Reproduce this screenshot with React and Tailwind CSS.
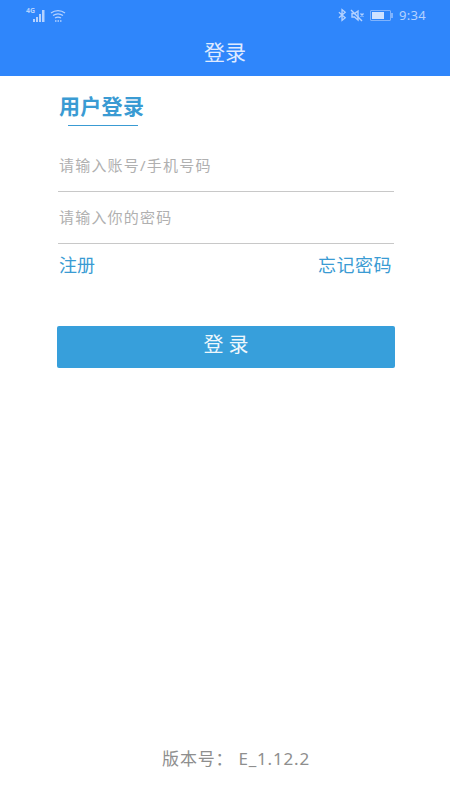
const font = { fontFamily: '"Noto Sans", "Noto Sans CJK SC", sans-serif' }

function StatusBar() {
  return (
    <div className="flex h-[30px] items-center justify-between pl-[26px] pr-[24px] text-[#b4d2ff]">
      <div className="flex items-center gap-[3px]">
        <div className="relative h-[13px] w-[21px]">
          <span className="absolute left-0 top-[-2px] text-[7px] font-bold leading-[8px]">4G</span>
          <svg width="21" height="13" viewBox="0 0 21 13" fill="currentColor" className="absolute left-0 top-0">
            <rect x="7" y="10" width="2" height="3" />
            <rect x="10" y="8" width="2" height="5" />
            <rect x="13" y="5" width="2" height="8" />
            <rect x="16" y="1" width="2.5" height="12" />
          </svg>
        </div>
        <svg width="16" height="13" viewBox="0 0 16 13" fill="none" stroke="currentColor" strokeWidth="1.3">
          <path d="M1 4C5 .8 11 .8 15 4" />
          <path d="M3 6.5C6 4.5 10 4.5 13 6.5" />
          <path d="M5 9C7 7.8 9 7.8 11 9" />
          <path d="M5 12h1.5M7.5 12H9M10 12h1.5" />
        </svg>
      </div>
      <div className="flex items-center">
        <svg width="9" height="14" viewBox="0 0 10 14" fill="none" stroke="currentColor" strokeWidth="1.5">
          <path d="M1 4l7 6-3.5 3V1L8 4l-7 6" />
        </svg>
        <svg width="15" height="13" viewBox="0 0 15 13" fill="none" stroke="currentColor" strokeWidth="1.4" className="ml-[3px]">
          <path d="M2 4.5h2.5L8 2v9L4.5 8H2z" />
          <path d="M1 1l11 11" />
          <path d="M10.5 4.5l3 3M13.5 4.5l-3 3" />
        </svg>
        <div className="ml-[5px] flex items-center">
          <div className="h-[11px] w-[21px] rounded-[1px] border border-[#7fb3fd] p-px">
            <div className="h-full w-[12px] bg-[#cfe2ff]" />
          </div>
          <div className="h-[5px] w-[2px] bg-[#7fb3fd]" />
        </div>
        <span className="ml-[6px] text-[13px] leading-none tracking-[0.3px]">9:34</span>
      </div>
    </div>
  )
}

export default function App() {
  return (
    <div className="flex h-[800px] w-[450px] flex-col bg-white" style={font}>
      <header className="h-[76px] bg-[#2f86fb]">
        <StatusBar />
        <h1 className="text-center text-[21px] font-normal leading-[44px] text-[#dfeaff]">登录</h1>
      </header>

      <main className="flex flex-1 flex-col px-[55px]">
        <div className="mt-[17px] pl-[4px]">
          <h2 className="text-[21px] font-bold leading-[26px] tracking-[0.3px] text-[#3a9bd3]">用户登录</h2>
          <div className="ml-[9px] mt-[6px] h-px w-[70px] bg-[#3a9bd3]" />
        </div>

        <div className="ml-[3px] mr-[1px] mt-[14px] flex h-[52px] items-center border-b border-[#c8c8c8] pl-px text-[15px] tracking-[1.2px] text-[#b0b0b0]">
          请输入账号/手机号码
        </div>
        <div className="ml-[3px] mr-[1px] flex h-[52px] items-center border-b border-[#c8c8c8] pl-px text-[15px] tracking-[1.2px] text-[#b0b0b0]">
          请输入你的密码
        </div>

        <div className="mt-[10px] flex justify-between pl-[4px] pr-[3px] text-[18px] leading-[22px] text-[#3a9bd3]">
          <span>注册</span>
          <span className="tracking-[0.5px]">忘记密码</span>
        </div>

        <button className="ml-[2px] mt-[50px] h-[42px] rounded-[2px] bg-[#379fdb] pb-[4px] text-[20px] leading-none text-[#eef7fc]">
          登 录
        </button>

        <p className="mb-[30px] mt-auto pl-[22px] text-center text-[17px] leading-[22px] tracking-[0.8px] text-[#8e8e8e]">
          版本号： E_1.12.2
        </p>
      </main>
    </div>
  )
}
